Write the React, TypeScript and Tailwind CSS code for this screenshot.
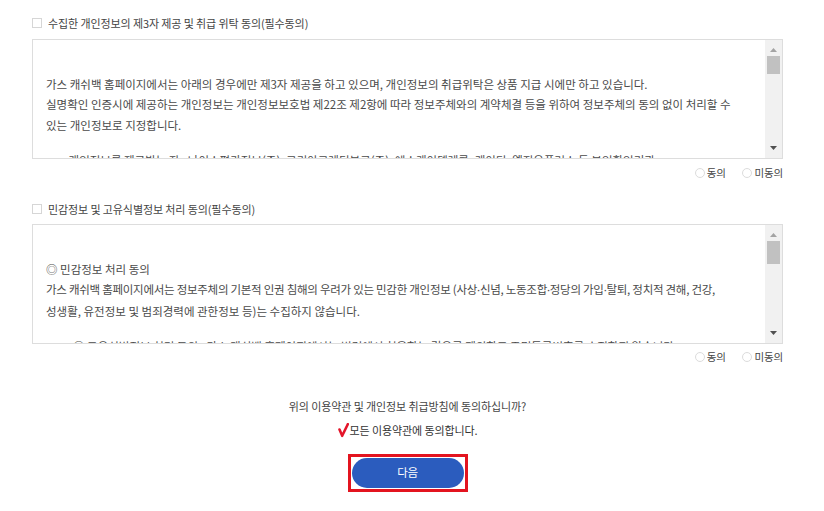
import React from "react";

function ScrollBar({ thumbTop, thumbHeight }: { thumbTop: number; thumbHeight: number }) {
  return (
    <div className="relative w-[17px] h-full bg-[#f1f1f1] shrink-0">
      <svg className="absolute left-[5px] top-[8px]" width="7" height="4" viewBox="0 0 7 4">
        <polygon points="3.5,0 7,4 0,4" fill="#a3a3a3" />
      </svg>
      <div
        className="absolute left-[2px] w-[13px] bg-[#c1c1c1]"
        style={{ top: thumbTop, height: thumbHeight }}
      />
      <svg className="absolute left-[5px] bottom-[8px]" width="7" height="4" viewBox="0 0 7 4">
        <polygon points="0,0 7,0 3.5,4" fill="#505050" />
      </svg>
    </div>
  );
}

function Label({ text, mt }: { text: string; mt: string }) {
  return (
    <div className={`flex items-center h-[20px] ${mt}`}>
      <div className="w-[10px] h-[10px] border border-[#d6d6d6] bg-white shrink-0" />
      <span className="ml-[6px] text-[11px] tracking-[-0.1px] text-[#444] whitespace-nowrap">{text}</span>
    </div>
  );
}

function Radios({ mt }: { mt: string }) {
  return (
    <div className={`flex items-center justify-end h-[18px] ${mt}`}>
      <div className="flex items-center">
        <div className="w-[10px] h-[10px] rounded-full border border-[#dcdcdc] bg-white" />
        <span className="ml-[2px] text-[10.5px] tracking-[-0.2px] text-[#444]">동의</span>
      </div>
      <div className="flex items-center ml-[16px]">
        <div className="w-[10px] h-[10px] rounded-full border border-[#dcdcdc] bg-white" />
        <span className="ml-[3px] text-[10.5px] tracking-[-0.2px] text-[#444]">미동의</span>
      </div>
    </div>
  );
}

type L = { text: string; tight?: boolean };

function Line({ text, tight }: L) {
  const parts = text.split("·");
  return (
    <div className={`whitespace-nowrap ${tight ? "tracking-[-0.27px]" : ""}`}>
      {parts.map((p, i) => (
        <React.Fragment key={i}>
          {i > 0 && <span className="font-['Noto_Sans',sans-serif]">·</span>}
          {p}
        </React.Fragment>
      ))}
    </div>
  );
}

function TextBox({
  mt,
  lines,
  tail,
  tailIndent,
  thumbHeight,
}: {
  mt: string;
  lines: L[];
  tail: string;
  tailIndent: string;
  thumbHeight: number;
}) {
  return (
    <div className={`flex h-[120px] border border-[#dddddd] bg-white ${mt}`}>
      <div className="flex-1 overflow-hidden pl-[13px] pt-[13px] text-[11.5px] tracking-normal leading-[20.5px] text-[#4a4a4a]">
        <div className="h-[20.5px]" />
        {lines.map((l, i) => (
          <Line key={i} text={l.text} tight={l.tight} />
        ))}
        <div className="h-[15px]" />
        <div className={`whitespace-nowrap ${tailIndent}`}>{tail}</div>
      </div>
      <ScrollBar thumbTop={16} thumbHeight={thumbHeight} />
    </div>
  );
}

export default function App() {
  return (
    <div className="w-[824px] h-[511px] bg-white pl-[32px] pr-[41px] pt-[13px] font-['Noto_Sans_CJK_KR','Noto_Sans',sans-serif] overflow-hidden">
      <Label text="수집한 개인정보의 제3자 제공 및 취급 위탁 동의(필수동의)" mt="mt-0" />
      <TextBox
        mt="mt-[6px]"
        lines={[
          { text: "가스 캐쉬백 홈페이지에서는 아래의 경우에만 제3자 제공을 하고 있으며, 개인정보의 취급위탁은 상품 지급 시에만 하고 있습니다." },
          { text: "실명확인 인증시에 제공하는 개인정보는 개인정보보호법 제22조 제2항에 따라 정보주체와의 계약체결 등을 위하여 정보주체의 동의 없이 처리할 수" },
          { text: "있는 개인정보로 지정합니다." },
        ]}
        tail="- 개인정보를 제공받는 자 : 나이스평가정보(주), 코리아크레딧뷰로(주), 에스케이텔레콤, 케이티, 엘지유플러스 등 본인확인기관"
        tailIndent="pl-[16px]"
        thumbHeight={18}
      />
      <Radios mt="mt-[5px]" />
      <Label text="민감정보 및 고유식별정보 처리 동의(필수동의)" mt="mt-[17px]" />
      <TextBox
        mt="mt-[5px]"
        lines={[
          { text: "◎ 민감정보 처리 동의" },
          {
            text: "가스 캐쉬백 홈페이지에서는 정보주체의 기본적 인권 침해의 우려가 있는 민감한 개인정보 (사상·신념, 노동조합·정당의 가입·탈퇴, 정치적 견해, 건강,",
            tight: true,
          },
          { text: "성생활, 유전정보 및 범죄경력에 관한정보 등)는 수집하지 않습니다." },
        ]}
        tail="◎ 고유식별정보 처리 동의 : 가스 캐쉬백 홈페이지에서는 법령에서 허용하는 경우를 제외하고 주민등록번호를 수집하지 않습니다."
        tailIndent="pl-[27px]"
        thumbHeight={23}
      />
      <Radios mt="mt-[4px]" />
      <div className="flex justify-center items-center h-[18px] mt-[31px]">
        <span className="text-[11px] tracking-[-0.1px] text-[#444]">
          위의 이용약관 및 개인정보 취급방침에 동의하십니까?
        </span>
      </div>
      <div className="flex justify-center items-center h-[18px] mt-[6px]">
        <svg width="11" height="15" viewBox="0 0 11 15" className="mr-[1px]">
          <path d="M1.5 6.5 L4.2 12.8 L9.8 1.2" fill="none" stroke="#e4152a" strokeWidth="2.6" strokeLinecap="round" strokeLinejoin="round" />
        </svg>
        <span className="text-[11px] tracking-[-0.1px] text-[#333]">모든 이용약관에 동의합니다.</span>
      </div>
      <div className="flex justify-center mt-[15px]">
        <div className="w-[120px] h-[38px] border-[3px] border-[#e3141f] p-[1px] flex">
          <div className="flex-1 rounded-full bg-[#2b5cbe] flex items-center justify-center">
            <span className="text-[11.5px] tracking-[-0.3px] text-white">다음</span>
          </div>
        </div>
      </div>
    </div>
  );
}
